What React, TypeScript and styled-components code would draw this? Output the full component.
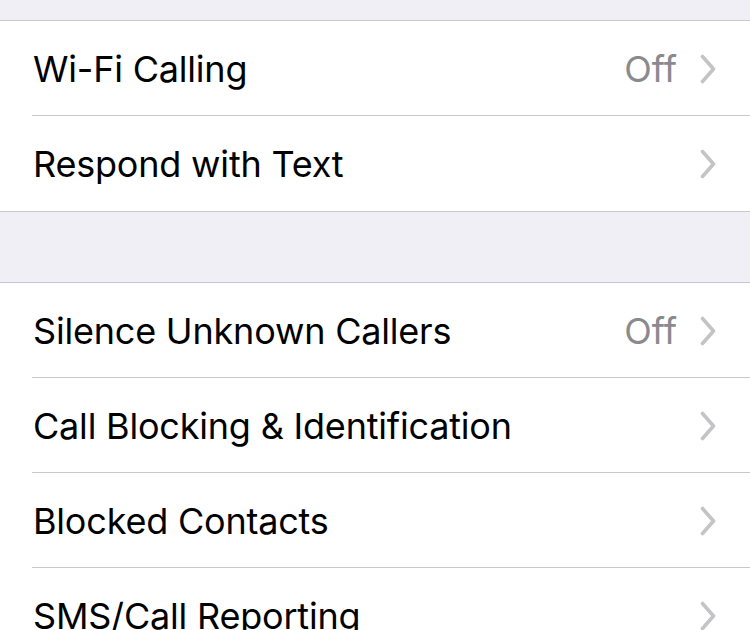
import styled, { createGlobalStyle } from "styled-components";

const GlobalStyle = createGlobalStyle`
  html, body {
    margin: 0;
    padding: 0;
    background: #f0eff5;
    font-family: Inter, "Noto Sans", "Liberation Sans", sans-serif;
    -webkit-font-smoothing: antialiased;
  }
`;

type Item = { label: string; value?: string };

const calls: Item[] = [
  { label: "Wi-Fi Calling", value: "Off" },
  { label: "Respond with Text" },
];

const blocking: Item[] = [
  { label: "Silence Unknown Callers", value: "Off" },
  { label: "Call Blocking & Identification" },
  { label: "Blocked Contacts" },
  { label: "SMS/Call Reporting" },
];

export default function App() {
  return (
    <>
      <GlobalStyle />
      <Page>
        <Spacer $height={20} />
        <Group items={calls} />
        <Spacer $height={70} />
        <Group items={blocking} />
      </Page>
    </>
  );
}

function Group({ items }: { items: Item[] }) {
  return (
    <Section>
      {items.map((item) => (
        <Row key={item.label}>
          <Label>{item.label}</Label>
          <Trailing>
            {item.value && <Value>{item.value}</Value>}
            <Chevron />
          </Trailing>
        </Row>
      ))}
    </Section>
  );
}

function Chevron() {
  return (
    <ChevronIcon width="16" height="30" viewBox="0 0 16 30">
      <path
        d="M2.5 2.5 L13.5 15 L2.5 27.5"
        fill="none"
        stroke="#c4c4c7"
        strokeWidth="3.6"
        strokeLinecap="round"
        strokeLinejoin="round"
      />
    </ChevronIcon>
  );
}

const Page = styled.div`
  width: 750px;
  height: 630px;
  overflow: hidden;
  background: #f0eff5;
`;

const Spacer = styled.div<{ $height: number }>`
  height: ${(p) => p.$height}px;
`;

const Section = styled.div`
  background: #fff;
  border-top: 1px solid #c8c7cc;
  border-bottom: 1px solid #c8c7cc;
`;

// rows sit flush; the inset hairline is painted over the previous row's last pixel
const Row = styled.div`
  position: relative;
  display: flex;
  align-items: center;
  justify-content: space-between;
  height: 95px;
  box-sizing: border-box;
  padding: 0 34px 0 33px;

  & + &::before {
    content: "";
    position: absolute;
    top: -1px;
    left: 32px;
    right: 0;
    height: 1px;
    background: #c8c7cc;
  }
`;

const Label = styled.span`
  font-size: 36px;
  color: #000;
  letter-spacing: -0.2px;
`;

const Trailing = styled.div`
  display: flex;
  align-items: center;
  gap: 23px;
`;

const Value = styled.span`
  font-size: 36px;
  color: #8a8a8e;
`;

const ChevronIcon = styled.svg`
  display: block;
`;
